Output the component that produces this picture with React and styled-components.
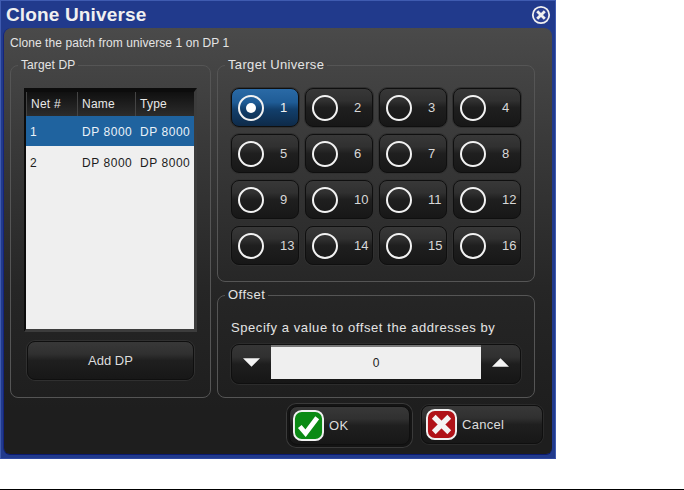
import React from "react";
import styled, { createGlobalStyle } from "styled-components";

const GlobalStyle = createGlobalStyle`
  html, body {
    margin: 0;
    padding: 0;
    background: #fff;
  }
  body {
    width: 684px;
    height: 490px;
    overflow: hidden;
    font-family: "Liberation Sans", Arial, sans-serif;
    font-size: 12px;
    color: #e4e4e4;
  }
`;

const Page = styled.div`
  width: 684px;
  height: 490px;
  display: flex;
  flex-direction: column;
  justify-content: space-between;
`;

const Rule = styled.div`
  height: 1px;
  background: #000;
`;

const Win = styled.div`
  width: 556px;
  height: 459px;
  box-sizing: border-box;
  display: flex;
  flex-direction: column;
  background: #213a8c;
  border: 1px solid #3f5bb0;
  border-bottom-color: #2f47a0;
  padding: 0 3px 4px 3px;
`;

const TitleBar = styled.div`
  height: 27px;
  flex: none;
  display: flex;
  align-items: center;
  justify-content: space-between;
  padding: 0 1px 0 2px;
`;

const Title = styled.div`
  font-size: 19px;
  font-weight: bold;
  letter-spacing: 0.15px;
  color: #f0f0f0;
`;

const Panel = styled.div`
  flex: 1;
  display: flex;
  flex-direction: column;
  padding: 0 6px;
  border-radius: 8px 8px 6px 6px;
  background: linear-gradient(#4a4a4a 0, #3a3a3a 110px, #262626 260px, #1e1e1e 380px);
  box-shadow: 0 1px 0 #0a1a70, -1px 0 0 #14247c;
`;

const Intro = styled.div`
  height: 30px;
  line-height: 30px;
  flex: none;
  white-space: pre;
  letter-spacing: 0.07px;
`;

const Columns = styled.div`
  display: flex;
  gap: 6px;
  height: 340px;
  flex: none;
`;

const RightColumn = styled.div`
  width: 318px;
  display: flex;
  flex-direction: column;
  gap: 6px;
`;

const Group = styled.fieldset`
  margin: 0;
  box-sizing: border-box;
  width: ${(p) => p.$w}px;
  height: ${(p) => p.$h}px;
  min-width: 0;
  border: 1px solid #555;
  border-radius: 8px;
  padding: ${(p) => p.$pad};
  display: flex;
  flex-direction: column;
`;

const Legend = styled.legend`
  margin-left: -6px;
  padding: 0 3px;
  line-height: 14px;
  color: #e4e4e4;
  font-size: ${(p) => p.$size}px;
  letter-spacing: ${(p) => p.$ls}px;
`;

const List = styled.div`
  width: 173px;
  height: 244px;
  box-sizing: border-box;
  border: 3px solid #0c0c0c;
  border-left-width: 2px;
  border-top-width: 4px;
  border-right-color: #3c3c3c;
  border-bottom-color: #3c3c3c;
  background: #efefef;
  display: flex;
  flex-direction: column;
`;

const ColsRow = styled.div`
  display: grid;
  grid-template-columns: 52px 58px 1fr;
  align-items: center;
  height: ${(p) => p.$h}px;
  flex: none;
  margin-bottom: ${(p) => p.$after}px;
  background: ${(p) => p.$bg};
  color: ${(p) => p.$fg};
`;

const Cell = styled.div`
  padding: 1px 0 0 4px;
  height: 100%;
  display: flex;
  align-items: center;
  white-space: nowrap;
  box-sizing: border-box;
  letter-spacing: 0.55px;
`;

const HeadCell = styled(Cell)`
  padding-top: 0;
  letter-spacing: 0.25px;
  background: linear-gradient(#101010, #2c2c2c);
  border-left: 1px solid #444;
  margin-left: ${(p) => (p.$first ? 0 : -1)}px;
`;

const Raised = styled.button`
  margin: 0;
  padding: 0;
  font: inherit;
  color: #dcdcdc;
  border: 1px solid #0f0f0f;
  border-radius: 8px;
  box-sizing: border-box;
  background: linear-gradient(#383838 0, #303030 32%, #1f1f1f 50%, #171717 100%);
  box-shadow: 0 0 0 1px #303030;
`;

const AddButton = styled(Raised)`
  width: 167px;
  height: 39px;
  margin: 9px 0 0 3px;
  font-size: 13px;
`;

const RadioGrid = styled.div`
  display: grid;
  grid-template-columns: repeat(4, 68px);
  grid-auto-rows: 39px;
  gap: 7px 6px;
`;

const RadioButton = styled(Raised)`
  display: flex;
  align-items: center;
  gap: 16px;
  padding-left: 6px;
  font-size: 13px;
  background: ${(p) =>
    p.$on
      ? "linear-gradient(#2a6aa6 0, #1f5c96 36%, #123f6c 55%, #0e2a48 100%)"
      : "linear-gradient(#383838 0, #303030 32%, #1f1f1f 50%, #171717 100%)"};
  color: ${(p) => (p.$on ? "#f0f0f0" : "#d8d8d8")};
`;

const Ring = styled.span`
  width: 26px;
  height: 26px;
  box-sizing: border-box;
  border: 2.5px solid #f2f2f2;
  border-radius: 50%;
  display: flex;
  align-items: center;
  justify-content: center;
`;

const Dot = styled.span`
  width: 10px;
  height: 10px;
  border-radius: 50%;
  background: #fff;
`;

const OffsetText = styled.div`
  height: 18px;
  line-height: 18px;
  margin-bottom: 7px;
  font-size: 13px;
  letter-spacing: 0.57px;
  white-space: nowrap;
`;

const Spinner = styled.div`
  width: 290px;
  height: 40px;
  box-sizing: border-box;
  display: flex;
  align-items: flex-start;
  border-radius: 8px;
  background: linear-gradient(#363636 0, #303030 32%, #1e1e1e 50%, #161616 100%);
  border: 1px solid #0f0f0f;
  box-shadow: 0 0 0 1px #2c2c2c;
`;

const SpinSide = styled.div`
  width: 39px;
  height: 34px;
  flex: none;
  display: flex;
  align-items: center;
  justify-content: center;
`;

const ValueBox = styled.div`
  flex: 1;
  height: 34px;
  display: flex;
  align-items: center;
  justify-content: center;
  color: #1c1c1c;
  background: #efefef;
  border-top: 2px solid #777;
  box-sizing: border-box;
`;

const Footer = styled.div`
  display: flex;
  height: 50px;
  padding-left: 276px;
  padding-top: 7px;
  box-sizing: border-box;
  flex: none;
  gap: 8px;
`;

const OkWrap = styled.div`
  width: 127px;
  height: 45px;
  box-sizing: border-box;
  padding: 3px;
  border-radius: 10px;
  background: #141414;
  box-shadow: inset 0 0 0 1px #3a3a3a;
  margin-top: -2px;
`;

const DialogButton = styled(Raised)`
  width: ${(p) => p.$w}px;
  height: 39px;
  display: flex;
  align-items: center;
  gap: 5px;
  padding-left: ${(p) => (p.$plain ? 4 : 3)}px;
  font-size: 13px;
  letter-spacing: 0.3px;
  box-shadow: ${(p) => (p.$plain ? "0 0 0 1px #2a2a2a" : "none")};
`;

function CloseIcon() {
  return (
    <svg width="20" height="20" viewBox="0 0 20 20">
      <circle cx="10" cy="10" r="8.2" fill="#2a3f92" stroke="#f0f0f0" strokeWidth="1.8" />
      <path d="M6.2 6.2 L13.8 13.8 M13.8 6.2 L6.2 13.8" stroke="#f0f0f0" strokeWidth="2.8" />
    </svg>
  );
}

function Arrow({ up }) {
  return (
    <svg width="17" height="9" viewBox="0 0 18 9">
      <path d={up ? "M0 9 L9 0 L18 9 Z" : "M0 0 L18 0 L9 9 Z"} fill="#f4f4f4" />
    </svg>
  );
}

function OkIcon() {
  return (
    <svg width="31" height="31" viewBox="0 0 32 32">
      <rect x="1" y="1" width="30" height="30" rx="8" fill="#0b8a14" stroke="#f2f2f2" strokeWidth="2" />
      <path d="M7 17 L13 24 L25 8" fill="none" stroke="#fff" strokeWidth="5" />
    </svg>
  );
}

function CancelIcon() {
  return (
    <svg width="31" height="31" viewBox="0 0 32 32">
      <rect x="1" y="1" width="30" height="30" rx="8" fill="#b01218" stroke="#f2f2f2" strokeWidth="2" />
      <path d="M8 8 L24 24 M24 8 L8 24" fill="none" stroke="#f4f4f4" strokeWidth="5.5" />
    </svg>
  );
}

const rows = [
  { net: "1", name: "DP 8000", type: "DP 8000", on: true },
  { net: "2", name: "DP 8000", type: "DP 8000" },
];

const universes = Array.from({ length: 16 }, (_, i) => i + 1);

export default function App() {
  return (
    <Page>
      <GlobalStyle />
      <Win>
        <TitleBar>
          <Title>Clone Universe</Title>
          <CloseIcon />
        </TitleBar>
        <Panel>
          <Intro>Clone the patch from universe 1 on DP 1</Intro>
          <Columns>
            <Group $w={201} $h={340} $pad="16px 13px 0 13px">
              <Legend $size={12} $ls={0.1}>Target DP</Legend>
              <List>
                <ColsRow $h={24} $after={0} $fg="#e8e8e8">
                  <HeadCell $first>Net #</HeadCell>
                  <HeadCell>Name</HeadCell>
                  <HeadCell>Type</HeadCell>
                </ColsRow>
                {rows.map((r) => (
                  <ColsRow key={r.net} $h={30} $after={1} $bg={r.on ? "#1f639f" : "transparent"} $fg={r.on ? "#eaf2f8" : "#1c1c1c"}>
                    <Cell>{r.net}</Cell>
                    <Cell>{r.name}</Cell>
                    <Cell>{r.type}</Cell>
                  </ColsRow>
                ))}
              </List>
              <AddButton>Add DP</AddButton>
            </Group>
            <RightColumn>
              <Group $w={318} $h={224} $pad="16px 13px 0 13px">
                <Legend $size={13} $ls={0.35}>Target Universe</Legend>
                <RadioGrid>
                  {universes.map((n) => (
                    <RadioButton key={n} $on={n === 1}>
                      <Ring>{n === 1 && <Dot />}</Ring>
                      <span>{n}</span>
                    </RadioButton>
                  ))}
                </RadioGrid>
              </Group>
              <Group $w={318} $h={110} $pad="17px 13px 0 13px">
                <Legend $size={13} $ls={0.5}>Offset</Legend>
                <OffsetText>Specify a value to offset the addresses by</OffsetText>
                <Spinner>
                  <SpinSide><Arrow /></SpinSide>
                  <ValueBox>0</ValueBox>
                  <SpinSide><Arrow up /></SpinSide>
                </Spinner>
              </Group>
            </RightColumn>
          </Columns>
          <Footer>
            <OkWrap>
              <DialogButton $w={121}>
                <OkIcon />
                <span>OK</span>
              </DialogButton>
            </OkWrap>
            <DialogButton $w={122} $plain>
              <CancelIcon />
              <span>Cancel</span>
            </DialogButton>
          </Footer>
        </Panel>
      </Win>
      <Rule />
    </Page>
  );
}
